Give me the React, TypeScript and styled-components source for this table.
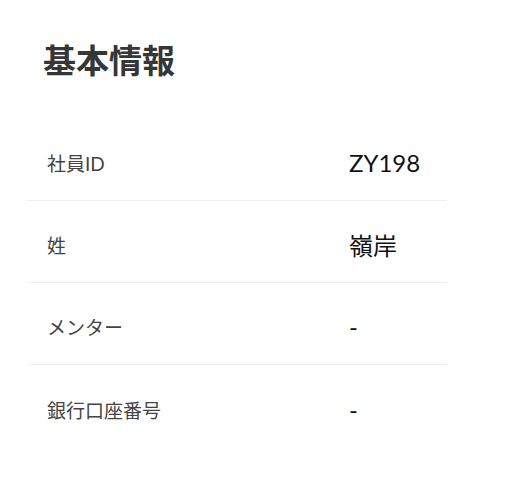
import styled, { createGlobalStyle } from "styled-components";

const GlobalStyle = createGlobalStyle`
  body {
    margin: 0;
    background: #ffffff;
    font-family: Lato, "Noto Sans CJK JP", sans-serif;
  }
`;

const rows = [
  { label: "社員ID", value: "ZY198" },
  { label: "姓", value: "嶺岸" },
  { label: "メンター", value: "-" },
  { label: "銀行口座番号", value: "-" },
];

export default function App() {
  return (
    <>
      <GlobalStyle />
      <Card>
        <Title>基本情報</Title>
        <Table>
          {rows.map((row) => (
            <Row key={row.label}>
              <Label>{row.label}</Label>
              <Value>{row.value}</Value>
            </Row>
          ))}
        </Table>
      </Card>
    </>
  );
}

//styles
const Card = styled.div`
  padding: 40px 0 0 27px;
  width: 420px;
`;

const Title = styled.h1`
  margin: 0 0 39px 16px;
  font-size: 33px;
  line-height: 40px;
  font-weight: 700;
  color: #363636;
`;

const Table = styled.div`
  display: flex;
  flex-direction: column;
`;

const Row = styled.div`
  box-sizing: border-box;
  display: grid;
  grid-template-columns: 303px 1fr;
  align-items: center;
  height: 82px;
  padding-top: 6px;
  border-bottom: 1px solid #eeeeee;

  &:last-child {
    border-bottom: none;
  }
`;

const Label = styled.span`
  padding-left: 20px;
  font-size: 19px;
  color: #444444;
`;

const Value = styled.span`
  padding-left: 19px;
  font-size: 24px;
  color: #111111;
`;
